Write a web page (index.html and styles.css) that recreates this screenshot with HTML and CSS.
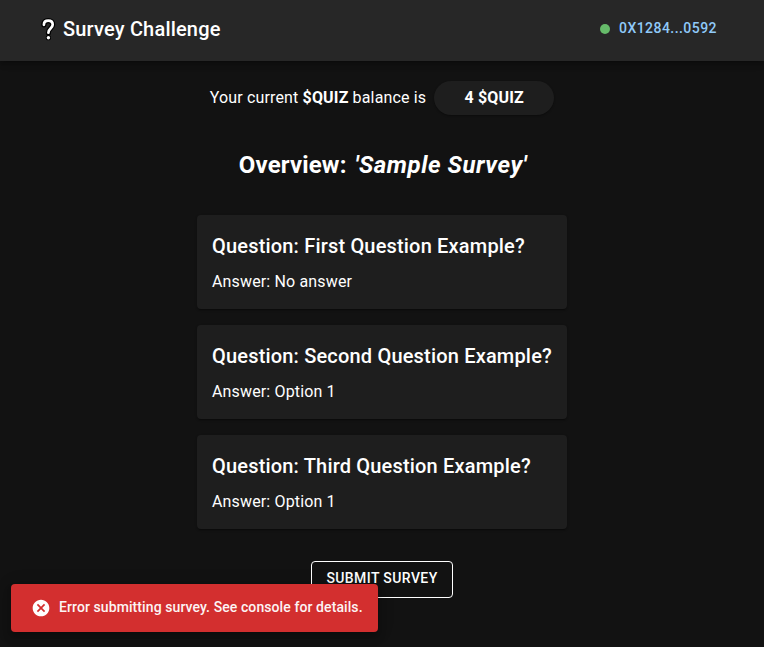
FILE: index.html
```html
<!DOCTYPE html>
<html lang="en">
<head>
<meta charset="utf-8">
<title>Survey Challenge</title>
<link rel="stylesheet" href="styles.css">
</head>
<body>
<header class="bar">
  <div class="brand">
    <svg class="brand-icon" width="16" height="24" viewBox="0 0 16 24">
      <g class="mark-outline"><path d="M3.900 7.800C3.900 5 5.700 3.700 8.300 3.700S12.700 5.200 12.700 7.800C12.700 11.200 8.400 11.300 8.400 15.700"/><path d="M8.400 20.600V20.700"/></g>
      <g class="mark"><path d="M3.900 7.800C3.900 5 5.700 3.700 8.300 3.700S12.700 5.200 12.700 7.800C12.700 11.200 8.400 11.300 8.400 15.700"/><path class="mark-dot" d="M8.400 20.600V20.700"/></g>
    </svg>
    <span class="brand-name">Survey Challenge</span>
  </div>
  <div class="account"><span class="dot"></span><span>0X1284...0592</span></div>
</header>
<main class="content">
  <div class="balance"><span>Your current <b>$QUIZ</b> balance is</span><b class="pill">4 $QUIZ</b></div>
  <h1 class="title">Overview: <em>'Sample Survey'</em></h1>
  <div class="cards">
    <section class="card"><h2>Question: First Question Example?</h2><p>Answer: No answer</p></section>
    <section class="card"><h2>Question: Second Question Example?</h2><p>Answer: Option 1</p></section>
    <section class="card"><h2>Question: Third Question Example?</h2><p>Answer: Option 1</p></section>
  </div>
  <button class="submit">SUBMIT SURVEY</button>
</main>
<div class="toast">
  <svg width="20" height="20" viewBox="0 0 24 24" fill="#fff"><path d="M12 2C6.470 2 2 6.470 2 12s4.470 10 10 10 10-4.470 10-10S17.530 2 12 2zm5 13.590L15.590 17 12 13.410 8.410 17 7 15.590 10.590 12 7 8.410 8.410 7 12 10.590 15.590 7 17 8.410 13.410 12 17 15.590z"/></svg>
  <span>Error submitting survey. See console for details.</span>
</div>
</body>
</html>
```
FILE: styles.css
```css
* { box-sizing: border-box; }
body {
  margin: 0;
  height: 647px;
  overflow: hidden;
  background: #121212;
  color: #fff;
  font: 400 16px/24px Roboto, sans-serif;
  letter-spacing: .15px;
}
.bar {
  display: flex;
  align-items: center;
  justify-content: space-between;
  height: 61px;
  padding: 0 47px 4px 40px;
  background: #272727;
  box-shadow: 0 2px 4px -1px rgba(0,0,0,.2), 0 4px 5px rgba(0,0,0,.14), 0 1px 10px rgba(0,0,0,.12);
}
.brand { display: flex; align-items: center; gap: 7px; }
.brand-icon { fill: none; stroke-linecap: round; stroke-linejoin: round; }
.mark-outline { stroke: #000; stroke-width: 5.200; }
.mark { stroke: #fff; stroke-width: 2.700; }
.mark-dot { stroke-width: 3.400; }
.brand-name { font-size: 20px; font-weight: 500; line-height: 32px; letter-spacing: .18px; }
.account {
  display: flex;
  align-items: center;
  gap: 9px;
  color: #90caf9;
  font-size: 14px;
  font-weight: 500;
  line-height: 22px;
  letter-spacing: .45px;
}
.account span:last-child { padding-bottom: 2px; }
.dot { width: 10px; height: 10px; border-radius: 50%; background: #66bb6a; }
.content { display: flex; flex-direction: column; align-items: center; padding-top: 20px; }
.balance { display: flex; align-items: center; gap: 8px; height: 34px; }
b { font-weight: 700; }
.pill {
  width: 120px;
  height: 34px;
  border-radius: 17px;
  background: #1e1e1e;
  line-height: 34px;
  text-align: center;
  box-shadow: 0 1px 2px rgba(0,0,0,.35);
}
.title { margin: 34px 0 0; padding-left: 2px; font-size: 24px; font-weight: 700; line-height: 32px; }
.title em { margin-left: 2px; letter-spacing: .55px; }
.cards { display: flex; flex-direction: column; gap: 16px; width: 370px; margin-top: 34px; }
.card {
  height: 94px;
  padding: 15px;
  border-radius: 4px;
  background: #1e1e1e;
  box-shadow: 0 2px 1px -1px rgba(0,0,0,.2), 0 1px 1px rgba(0,0,0,.14), 0 1px 3px rgba(0,0,0,.12);
}
.card h2 { margin: 0; font-size: 20px; font-weight: 500; line-height: 32px; letter-spacing: .18px; white-space: nowrap; }
.card p { margin: 8px 0 0; }
.submit {
  height: 37px;
  width: 142px;
  margin-top: 32px;
  padding: 0 0 3px;
  border: 1px solid #fff;
  border-radius: 4px;
  background: transparent;
  color: #fff;
  font: 500 14px/24px Roboto, sans-serif;
  letter-spacing: .4px;
}
.toast {
  position: absolute;
  left: 11px;
  top: 584px;
  display: flex;
  align-items: center;
  gap: 8px;
  width: 367px;
  height: 48px;
  padding-left: 20px;
  border-radius: 4px;
  background: #d32f2f;
  font-size: 14px;
  font-weight: 500;
  letter-spacing: .09px;
  white-space: nowrap;
  box-shadow: 0 3px 5px -1px rgba(0,0,0,.2), 0 6px 10px rgba(0,0,0,.14), 0 1px 18px rgba(0,0,0,.12);
}
.toast span { padding-bottom: 2px; opacity: .95; }
```
